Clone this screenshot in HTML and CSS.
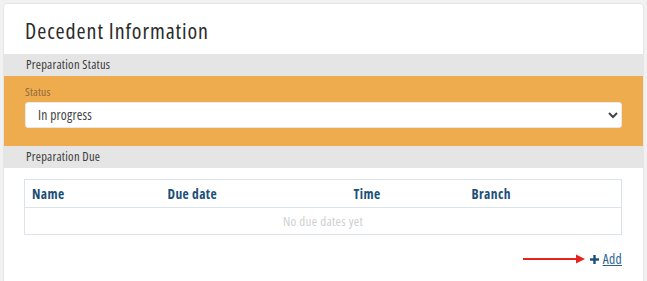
FILE: index.html
```html
<!DOCTYPE html>
<html lang="en">
<head>
  <meta charset="UTF-8">
  <title>Decedent Information</title>
  <link rel="stylesheet" href="styles.css">
</head>
<body>

<div class="card">
  <h1 class="card-title">Decedent Information</h1>

  <div class="section-bar">Preparation Status</div>
  <div class="status-panel">
    <label for="status">Status</label>
    <select id="status">
      <option>In progress</option>
      <option>Completed</option>
    </select>
  </div>

  <div class="section-bar">Preparation Due</div>
  <div class="due-body">
    <table class="due-table">
      <thead>
        <tr>
          <th class="col-name">Name</th>
          <th class="col-date">Due date</th>
          <th class="col-time">Time</th>
          <th class="col-branch">Branch</th>
        </tr>
      </thead>
      <tbody>
        <tr>
          <td colspan="4" class="empty">No due dates yet</td>
        </tr>
      </tbody>
    </table>

    <div class="add-row">
      <svg class="arrow" width="63" height="10" viewBox="0 0 63 10">
        <line x1="0" y1="5" x2="55" y2="5" stroke="#e52420" stroke-width="2"/>
        <polygon points="53,0.5 62,5 53,9.5" fill="#e52420"/>
      </svg>
      <a href="#" class="add-link">
        <svg width="9" height="9" viewBox="0 0 9 9">
          <rect x="3.3" y="0" width="2.4" height="9" fill="#1b4f78"/>
          <rect x="0" y="3.3" width="9" height="2.4" fill="#1b4f78"/>
        </svg>
        <span>Add</span>
      </a>
    </div>
  </div>
</div>

</body>
</html>
```

FILE: styles.css
```css
* {
  margin: 0;
  padding: 0;
  box-sizing: border-box;
}
body {
  font-family: "Open Sans", "Noto Sans", sans-serif;
  font-stretch: 75%;
  background-color: #f1f1f1;
  padding: 3px 3px 0 3px;
  color: #333;
}
.card {
  width: 641px;
  height: 290px;
  background-color: white;
  border: 1px solid #e6e6e6;
  border-radius: 4px;
}
.card-title {
  font-size: 22px;
  font-weight: normal;
  letter-spacing: 0.9px;
  color: #2b2b2b;
  height: 50px;
  line-height: 52px;
  padding-left: 21px;
}
.section-bar {
  background-color: #e5e5e5;
  font-size: 12.5px;
  letter-spacing: 0.25px;
  color: #3a3a3a;
  height: 22px;
  line-height: 22px;
  padding-left: 22px;
}
.status-panel {
  background-color: #efac4f;
  height: 70px;
  padding: 8px 21px 0 21px;
}
.status-panel label {
  display: block;
  font-size: 11.5px;
  letter-spacing: 0.2px;
  color: #8a6a3c;
  height: 18px;
}
.status-panel select {
  width: 100%;
  height: 26px;
  border: 1px solid #e8e8e8;
  border-radius: 3px;
  background-color: white;
  font-family: inherit;
  font-stretch: inherit;
  font-size: 13.5px;
  letter-spacing: 0.2px;
  color: #444;
  padding-left: 8px;
}
.due-body {
  padding: 11px 20px 0 20px;
}
.due-table {
  width: 598px;
  border-collapse: collapse;
  border: 1px solid #dde3ea;
}
.due-table th {
  height: 28px;
  text-align: left;
  font-size: 13.5px;
  letter-spacing: 0.4px;
  font-weight: bold;
  color: #1b4f78;
  padding-left: 7px;
  border-bottom: 1px solid #dde3ea;
}
.col-name { width: 136px; }
.col-date { width: 186px; }
.col-time { width: 118px; }
.due-table td.empty {
  height: 27px;
  text-align: center;
  font-size: 13px;
  letter-spacing: 0.3px;
  color: #cfcfcf;
}
.add-row {
  display: flex;
  justify-content: flex-end;
  align-items: center;
  margin-top: 15px;
  width: 598px;
}
.arrow {
  margin-right: 4px;
}
.add-link {
  display: flex;
  align-items: center;
  gap: 4px;
  color: #2a6592;
  font-size: 13.5px;
  letter-spacing: 0.3px;
}
.add-link span {
  text-decoration: underline;
}
```
